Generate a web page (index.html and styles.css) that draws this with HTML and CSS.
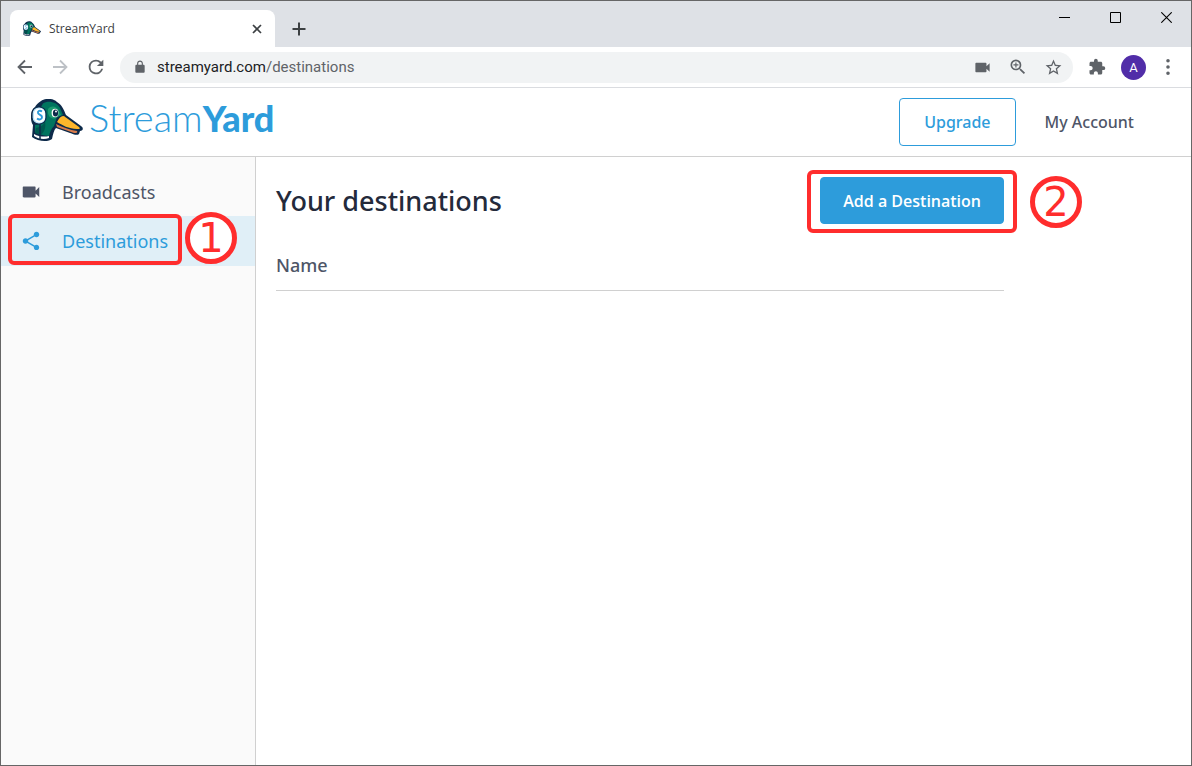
FILE: index.html
```html
<!DOCTYPE html>
<html lang="en">
<head>
<meta charset="utf-8">
<title>StreamYard</title>
<link rel="stylesheet" href="styles.css">
</head>
<body>
<svg class="defs" aria-hidden="true">
  <symbol id="duck" viewBox="0 0 52 44">
    <path fill="#0d2a4a" d="M10 2C14-1 22-1 26 3C31 6 33 11 35 16L50 27C53 29 52 32 49 32L48 35C46 37 42 35 39 34L25 29C23 31 22 35 21 40C18 43 7 43 1 38L2 26C-1 22-1 11 4 8C5 6 7 4 10 2Z"/>
    <path fill="#00745f" d="M12 4.500C17 1 26 3 29 9L32 16L26 18L23 27C20 30 19 33 18 37C12 36 7 36 4 33V26C14 26 17 15 10 8Z"/>
    <path fill="#1b9a70" d="M17 10C20 6 26 7 28 12L30 16L25 19C20 21 16 17 17 10Z"/>
    <path fill="#00584f" d="M14 22C12 28 8 28 5 29L4 34L10 36C14 32 15 28 14 22Z"/>
    <path fill="#fff" d="M3 35C8 38 14 38 18 37V39C13 41 7 40 3 37Z"/>
    <path fill="#fdb62b" d="M32 17C34 17 35 19 37 20L48 28C50 30 48 30 46 30C38 30 31 26 26 23C28 19 30 17 32 17Z"/>
    <path fill="#d97b4c" d="M25 25C31 28 39 31 46 32C47 34 45 34 43 34L26 28Z"/>
    <path fill="none" stroke="#0d2a4a" stroke-width="1.500" d="M9 24V41"/>
    <rect x="1" y="8" width="14" height="17" rx="6.500" fill="#b5e1f8" stroke="#0d2a4a" stroke-width="1.200"/>
    <rect x="3" y="9.500" width="11" height="14" rx="5" fill="#fff"/>
    <path fill="none" stroke="#2d9cdb" stroke-width="1.900" d="M11 12.500C9 11 6.500 12 7 14C7.500 16 11 16 11 18C11 21 8 21 6 19.500"/>
    <ellipse cx="24" cy="14" rx="3.400" ry="4.200" fill="#fff"/>
    <ellipse cx="24.500" cy="14" rx="2.600" ry="3.600" fill="#0d2a4a"/>
    <circle cx="25" cy="12.500" r="1" fill="#fff"/>
  </symbol>
  <symbol id="camera" viewBox="0 0 24 24"><path fill="currentColor" d="M17 10.500V7c0-.55-.45-1-1-1H4c-.55 0-1 .45-1 1v10c0 .55.45 1 1 1h12c.55 0 1-.45 1-1v-3.500l4 4v-11l-4 4z"/></symbol>
</svg>
<div class="window">
  <div class="tabstrip">
    <div class="tab">
      <svg class="favicon"><use href="#duck"/></svg>
      <span class="tab-title">StreamYard</span>
      <button class="icon-btn tab-close" aria-label="Close tab"><svg width="10" height="10" viewBox="0 0 10 10"><path d="M1 1L9 9M9 1L1 9" stroke="#3c4043" stroke-width="1.700"/></svg></button>
    </div>
    <button class="icon-btn new-tab" aria-label="New tab"><svg width="14" height="14" viewBox="0 0 14 14"><path d="M7 .500V13.500M.500 7H13.500" stroke="#3c4043" stroke-width="2"/></svg></button>
    <div class="win-controls">
      <button class="icon-btn" aria-label="Minimize"><svg width="11" height="11" viewBox="0 0 11 11"><path d="M0 5.500H11" stroke="#000"/></svg></button>
      <button class="icon-btn" aria-label="Maximize"><svg width="11" height="11" viewBox="0 0 11 11"><path fill="none" d="M.500.500H10.500V10.500H.500Z" stroke="#000"/></svg></button>
      <button class="icon-btn" aria-label="Close"><svg width="11" height="11" viewBox="0 0 11 11"><path d="M.300.300L10.700 10.700M10.700.300L.300 10.700" stroke="#000" stroke-width="1.100"/></svg></button>
    </div>
  </div>
  <div class="toolbar">
    <div class="nav-buttons">
      <button class="icon-btn" aria-label="Back"><svg width="20" height="20" viewBox="0 0 20 20"><path fill="none" d="M17 10H4M10 3.500L3.500 10L10 16.500" stroke="#5f6368" stroke-width="1.800"/></svg></button>
      <button class="icon-btn" aria-label="Forward"><svg width="20" height="20" viewBox="0 0 20 20"><path fill="none" d="M3 10H16M10 3.500L16.500 10L10 16.500" stroke="#bdc1c6" stroke-width="1.800"/></svg></button>
      <button class="icon-btn" aria-label="Reload"><svg width="22" height="22" viewBox="0 0 24 24"><path fill="#5f6368" d="M17.650 6.350A7.960 7.960 0 0 0 12 4a8 8 0 1 0 7.730 10h-2.080A6 6 0 1 1 12 6c1.660 0 3.140.69 4.220 1.780L13 11h7V4l-2.350 2.350z"/></svg></button>
    </div>
    <div class="omnibox">
      <svg class="lock" width="14" height="14" viewBox="0 0 24 24"><path fill="#5f6368" d="M18 8h-1V6c0-2.760-2.240-5-5-5S7 3.240 7 6v2H6c-1.100 0-2 .9-2 2v10c0 1.100.9 2 2 2h12c1.100 0 2-.9 2-2V10c0-1.100-.9-2-2-2zM9 6c0-1.660 1.340-3 3-3s3 1.340 3 3v2H9V6z"/></svg>
      <span class="url">streamyard.com<span class="url-path">/destinations</span></span>
      <div class="omni-icons">
        <button class="icon-btn" aria-label="Camera"><svg width="19" height="19"><use href="#camera"/></svg></button>
        <button class="icon-btn" aria-label="Zoom"><svg width="20" height="20" viewBox="0 0 24 24"><path fill="#5f6368" d="M15.500 14h-.79l-.28-.27A6.470 6.470 0 0 0 16 9.500 6.500 6.500 0 1 0 9.500 16c1.610 0 3.090-.59 4.230-1.570l.27.28v.79l5 4.990L20.490 19l-4.990-5zm-6 0C7.010 14 5 11.990 5 9.500S7.010 5 9.500 5 14 7.010 14 9.500 11.990 14 9.500 14zm3-5.200h-2.300V6.500H8.800v2.300H6.500v1.400h2.300v2.300h1.400v-2.300h2.300z"/></svg></button>
        <button class="icon-btn" aria-label="Bookmark"><svg width="19" height="19" viewBox="0 0 24 24"><path fill="#5f6368" d="M22 9.240l-7.190-.62L12 2 9.190 8.630 2 9.240l5.460 4.730L5.820 21 12 17.270 18.180 21l-1.630-7.030L22 9.240zM12 15.400l-3.760 2.270 1-4.280-3.320-2.880 4.380-.38L12 6.100l1.710 4.040 4.380.38-3.320 2.880 1 4.280L12 15.400z"/></svg></button>
      </div>
    </div>
    <div class="tool-icons">
      <button class="icon-btn" aria-label="Extensions"><svg width="18" height="18" viewBox="0 0 24 24"><path fill="#5f6368" d="M20.500 11H19V7c0-1.100-.9-2-2-2h-4V3.500a2.500 2.500 0 0 0-5 0V5H4c-1.100 0-1.990.9-1.990 2v3.800H3.500c1.490 0 2.700 1.210 2.700 2.700s-1.210 2.700-2.700 2.700H2V20c0 1.100.9 2 2 2h3.800v-1.500c0-1.490 1.210-2.700 2.700-2.700 1.490 0 2.700 1.210 2.700 2.700V22H17c1.100 0 2-.9 2-2v-4h1.500a2.500 2.500 0 0 0 0-5z"/></svg></button>
      <button class="icon-btn avatar" aria-label="Profile">A</button>
      <button class="icon-btn" aria-label="Menu"><svg width="4" height="16" viewBox="0 0 4 16"><path fill="#5f6368" d="M2 0a1.800 1.800 0 1 1 0 3.600 1.800 1.800 0 0 1 0-3.600M2 6.200a1.800 1.800 0 1 1 0 3.600 1.800 1.800 0 0 1 0-3.600M2 12.400a1.800 1.800 0 1 1 0 3.600 1.800 1.800 0 0 1 0-3.600"/></svg></button>
    </div>
  </div>
  <header class="header">
    <a class="logo" href="#"><svg class="logo-mark"><use href="#duck"/></svg><span class="logo-text">Stream<b>Yard</b></span></a>
    <nav class="account">
      <button class="btn btn-outline">Upgrade</button>
      <a class="account-link" href="#">My Account</a>
    </nav>
  </header>
  <div class="page">
    <nav class="sidebar">
      <a class="side-item" href="#"><svg width="22" height="22"><use href="#camera"/></svg>Broadcasts</a>
      <a class="side-item active" href="#"><svg width="22" height="22" viewBox="0 0 24 24"><path fill="currentColor" d="M18 16.080c-.76 0-1.440.3-1.960.77L8.910 12.700c.05-.23.09-.46.09-.7s-.04-.47-.09-.7l7.050-4.110c.54.5 1.250.81 2.040.81 1.660 0 3-1.340 3-3s-1.340-3-3-3-3 1.340-3 3c0 .24.04.47.09.7L8.040 9.810C7.500 9.310 6.790 9 6 9c-1.660 0-3 1.340-3 3s1.340 3 3 3c.79 0 1.500-.31 2.040-.81l7.120 4.160c-.05.21-.08.43-.08.65 0 1.610 1.310 2.920 2.920 2.920s2.920-1.310 2.920-2.920-1.310-2.920-2.920-2.920z"/></svg>Destinations
        <span class="frame frame-side"></span><span class="step step-one">1</span></a>
    </nav>
    <main class="content">
      <div class="title-row">
        <h1>Your destinations</h1>
        <div class="action">
          <button class="btn btn-primary">Add a Destination</button>
          <span class="frame frame-action"></span><span class="step step-two">2</span>
        </div>
      </div>
      <table class="list"><thead><tr><th scope="col">Name</th></tr></thead></table>
    </main>
  </div>
</div>
</body>
</html>
```
FILE: styles.css
```css
* { box-sizing: border-box; }
body { margin: 0; font-family: "Noto Sans", "Open Sans", sans-serif; color: #4e5567; background: #fff; }
a { color: inherit; text-decoration: none; }
svg { display: block; flex: none; }
button { font-family: inherit; cursor: pointer; }
.defs { position: absolute; width: 0; height: 0; }
.window { display: flex; flex-direction: column; min-height: 100vh; border: 1px solid #666; }
.icon-btn { display: flex; align-items: center; justify-content: center; padding: 0; border: 0; background: none; color: #5f6368; }

.tabstrip { display: flex; align-items: flex-end; height: 46px; background: #dee1e6; }
.tab { display: flex; align-items: center; width: 265px; height: 37px; margin-left: 9px; padding: 0 12px 0 13px; border-radius: 8px 8px 0 0; background: #fff; }
.favicon { width: 18px; height: 16px; }
.tab-title { flex: 1; margin-left: 8px; font: 12px/16px "Open Sans", sans-serif; color: #3c4043; }
.tab-close { width: 12px; height: 16px; }
.new-tab { width: 28px; height: 37px; margin-left: 10px; }
.win-controls { display: flex; align-self: flex-start; gap: 5px; margin-left: auto; padding-right: 2px; }
.win-controls .icon-btn { width: 46px; height: 32px; }

.toolbar { display: flex; align-items: center; height: 41px; padding: 0 16px 0 14px; border-bottom: 1px solid #dadce0; }
.nav-buttons { display: flex; align-items: center; gap: 15px; margin-right: 13px; }
.omnibox { display: flex; flex: 1; align-items: center; height: 31px; padding: 0 10px 0 13px; border-radius: 16px; background: #f1f3f4; }
.lock { margin-right: 10px; }
.url { flex: 1; font: 15px/20px Roboto, sans-serif; color: #202124; }
.url-path { color: #5f6368; }
.omni-icons { display: flex; align-items: center; gap: 16px; }
.tool-icons { display: flex; align-items: center; gap: 15px; margin-left: 15px; }
.tool-icons .icon-btn:last-child { width: 14px; }
.avatar { width: 25px; height: 25px; border-radius: 50%; background: #512da8; color: #fff; font: 13px/25px Roboto, sans-serif; }

.header { display: flex; align-items: center; justify-content: space-between; height: 69px; padding: 0 57px 0 30px; border-bottom: 1px solid #d0d0d0; }
.logo { display: flex; align-items: flex-start; gap: 6px; padding-bottom: 2px; }
.logo-mark { width: 52px; height: 44px; }
.logo-text { font: 300 38px/36px Lato, sans-serif; color: #2d9cdb; }
.logo-text b { font-size: 36px; font-weight: 900; }
.account { display: flex; align-items: center; gap: 29px; }
.account-link { font-size: 16px; font-weight: 500; }
.btn { display: block; height: 48px; padding: 0 24px; border: 1px solid #2d9cdb; border-radius: 4px; font-size: 16px; }
.btn-outline { background: #fff; color: #2d9cdb; font-weight: 500; }
.btn-primary { height: 47px; padding: 0 22px; background: #2d9cdb; color: #fff; font-family: "Open Sans", sans-serif; font-weight: 600; }

.page { display: flex; flex: 1; }
.sidebar { width: 255px; flex: none; padding-top: 10px; border-right: 1px solid #d0d0d0; background: #fafafa; }
.side-item { position: relative; display: flex; align-items: center; gap: 20px; height: 49px; padding-left: 19px; font-size: 18px; }
.side-item.active { height: 50px; background: #e0eff7; color: #2d9cdb; }
.content { flex: 1; max-width: 768px; padding: 20px 20px; }
.title-row { display: flex; align-items: center; justify-content: space-between; }
h1 { margin: 0; font-size: 27px; line-height: 47px; font-weight: 500; color: #242a3b; }
.action { position: relative; }
.list { width: 100%; margin-top: 18px; border-collapse: collapse; }
.list th { padding: 10px 0 12px; border-bottom: 1px solid #d0d0d0; font-size: 18px; line-height: 26px; font-weight: 500; text-align: left; }

.frame { position: absolute; border: 4px solid #ff2d2d; border-radius: 6px; pointer-events: none; }
.frame-side { top: -2px; left: 7px; width: 174px; height: 51px; }
.frame-action { inset: -7px -13px -9px; }
.step { position: absolute; display: flex; align-items: center; justify-content: center; width: 52px; height: 52px; border: 5px solid #ff2d2d; border-radius: 50%; background: #fff; color: #ff2d2d; font: 400 40px/42px "DejaVu Sans", sans-serif; }
.step-one { top: -4px; left: 184px; }
.step-two { top: -1px; left: calc(100% + 26px); }
```
